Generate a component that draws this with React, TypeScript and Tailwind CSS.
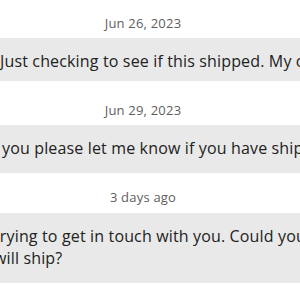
export default function App() {
  return (
    <div className="h-[300px] w-[300px] overflow-hidden bg-white font-['Open_Sans',sans-serif]">
      <div className="-ml-[57px] flex w-[400px] flex-col pt-[15px]">
        {/* Jun 26 */}
        <p className="text-center text-[13px] leading-[16px] tracking-[0.2px] text-[#5e5e5e]">
          Jun 26, 2023
        </p>
        <div className="mt-[7px] h-[43px] whitespace-nowrap bg-[#e9e9e9] pl-[57px] pt-[12px] text-[16px] leading-[22px] tracking-[0.15px] text-[#222222]">
          Just checking to see if this shipped. My client is asking.
        </div>

        {/* Jun 29 */}
        <p className="mt-[21px] text-center text-[13px] leading-[16px] tracking-[0.2px] text-[#5e5e5e]">
          Jun 29, 2023
        </p>
        <div className="mt-[7px] h-[48px] whitespace-nowrap bg-[#e9e9e9] pl-[59px] pt-[12px] text-[16px] leading-[22px] tracking-[0.15px] text-[#222222]">
          you please let me know if you have shipped it yet?
        </div>

        {/* 3 days ago */}
        <p className="mt-[16px] text-center text-[13px] leading-[16px] tracking-[0.2px] text-[#5e5e5e]">
          3 days ago
        </p>
        <div className="mt-[8px] h-[70px] bg-[#e9e9e9] pl-[51px] pt-[12px] text-[16px] leading-[22px] tracking-[0.15px] text-[#222222]">
          <p className="whitespace-nowrap">trying to get in touch with you. Could you let me know when it</p>
          <p className="whitespace-nowrap">will ship?</p>
        </div>
      </div>
    </div>
  );
}
